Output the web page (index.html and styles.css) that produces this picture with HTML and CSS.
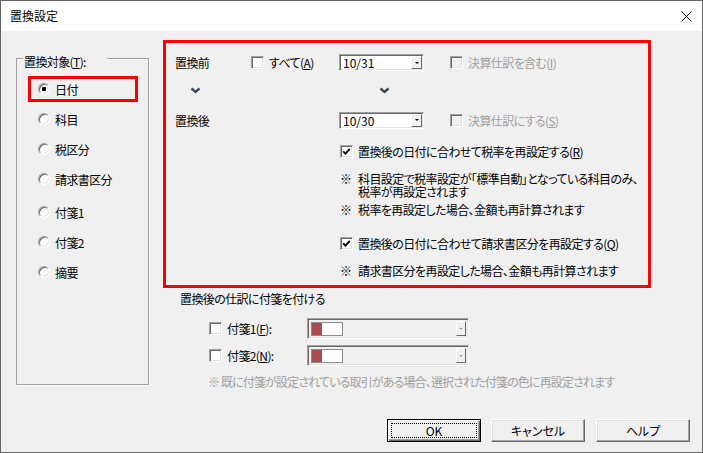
FILE: index.html
```html
<!DOCTYPE html>
<html lang="ja">
<head>
<meta charset="utf-8">
<title>置換設定</title>
<link rel="stylesheet" href="styles.css">
</head>
<body>
<div class="window">
  <div class="titlebar">
    <span class="title">置換設定</span>
    <svg class="close" width="11" height="11" viewBox="0 0 11 11"><path d="M0.5 0.5 L10.5 10.5 M10.5 0.5 L0.5 10.5" stroke="#000" stroke-width="1" fill="none"/></svg>
  </div>
  <div class="client">
    <div class="main">
      <div class="group">
        <div class="group-head"><span class="legend">置換対象(<u>T</u>):</span></div>
        <ul class="radios">
          <li class="rrow"><span class="ritem hl"><span class="radio on"></span>日付</span></li>
          <li class="rrow"><span class="ritem"><span class="radio"></span>科目</span></li>
          <li class="rrow"><span class="ritem"><span class="radio"></span>税区分</span></li>
          <li class="rrow"><span class="ritem"><span class="radio"></span>請求書区分</span></li>
          <li class="rrow gap"><span class="ritem"><span class="radio"></span>付箋1</span></li>
          <li class="rrow"><span class="ritem"><span class="radio"></span>付箋2</span></li>
          <li class="rrow"><span class="ritem"><span class="radio"></span>摘要</span></li>
        </ul>
      </div>
      <div class="rightcol">
        <div class="redbox">
          <div class="row r1">
            <span class="lbl">置換前</span>
            <span class="chkitem w88"><span class="chk"></span>すべて(<u>A</u>)</span>
            <span class="combo"><span class="val">10/31</span><span class="dd"></span></span>
            <span class="chkitem distext"><span class="chk dis"></span>決算仕訳を含む(<u>I</u>)</span>
          </div>
          <div class="row r2">
            <svg class="chev chev1" width="11" height="7" viewBox="0 0 11 7"><polyline points="1.5,1.5 5.5,5 9.5,1.5" fill="none" stroke="#3b4859" stroke-width="2.4"/></svg>
            <svg class="chev chev2" width="11" height="7" viewBox="0 0 11 7"><polyline points="1.5,1.5 5.5,5 9.5,1.5" fill="none" stroke="#3b4859" stroke-width="2.4"/></svg>
          </div>
          <div class="row r3">
            <span class="lbl">置換後</span>
            <span class="w88"></span>
            <span class="combo"><span class="val">10/30</span><span class="dd"></span></span>
            <span class="chkitem distext"><span class="chk dis"></span>決算仕訳にする(<u>S</u>)</span>
          </div>
          <div class="row r4">
            <span class="chkitem indent"><span class="chk"><svg width="9" height="9" viewBox="0 0 9 9"><polyline points="1.2,4.3 3.4,6.6 7.8,1.8" fill="none" stroke="#000" stroke-width="1.8"/></svg></span>置換後の日付に合わせて税率を再設定する(<u>R</u>)</span>
          </div>
          <div class="notes">
            <div class="note n1"><span class="mark">※</span><span>科目設定で税率設定が「標準自動」となっている科目のみ、<br>税率が再設定されます</span></div>
            <div class="note n2"><span class="mark">※</span><span>税率を再設定した場合、金額も再計算されます</span></div>
          </div>
          <div class="row r5">
            <span class="chkitem indent"><span class="chk"><svg width="9" height="9" viewBox="0 0 9 9"><polyline points="1.2,4.3 3.4,6.6 7.8,1.8" fill="none" stroke="#000" stroke-width="1.8"/></svg></span>置換後の日付に合わせて請求書区分を再設定する(<u>Q</u>)</span>
          </div>
          <div class="notes">
            <div class="note n3"><span class="mark">※</span><span>請求書区分を再設定した場合、金額も再計算されます</span></div>
          </div>
        </div>
        <div class="tags-title">置換後の仕訳に付箋を付ける</div>
        <div class="trow t1">
          <span class="chk"></span><span class="tlabel">付箋1(<u>F</u>):</span>
          <span class="tcombo"><span class="swatch"><span class="sw-red"></span></span><span class="dd ddis"></span></span>
        </div>
        <div class="trow t2">
          <span class="chk"></span><span class="tlabel">付箋2(<u>N</u>):</span>
          <span class="tcombo"><span class="swatch"><span class="sw-red"></span></span><span class="dd ddis"></span></span>
        </div>
        <div class="tnote">※ 既に付箋が設定されている取引がある場合、選択された付箋の色に再設定されます</div>
      </div>
    </div>
    <div class="buttons">
      <span class="btn default"><span class="focus">OK</span></span>
      <span class="btn cancel">キャンセル</span>
      <span class="btn help">ヘルプ</span>
    </div>
  </div>
</div>
</body>
</html>
```
FILE: styles.css
```css
html, body {
  margin: 0;
  padding: 0;
  background: #fff;
}
body {
  font-family: "Noto Sans CJK JP", "Noto Sans", sans-serif;
  font-size: 12px;
  font-feature-settings: "palt" 1;
  letter-spacing: -0.6px;
  color: #000;
}
u { text-underline-offset: 1px; }

.window {
  width: 703px;
  height: 453px;
  box-sizing: border-box;
  border: 1px solid #646464;
  display: flex;
  flex-direction: column;
  background: #fff;
}
.titlebar {
  height: 30px;
  flex: none;
  display: flex;
  align-items: center;
  justify-content: space-between;
  padding: 0 10px 0 9px;
  background: #fff;
}
.title { line-height: 12px; letter-spacing: 0; }
.close { display: block; }

.client {
  flex: 1;
  background: #f0f0f0;
  display: flex;
  flex-direction: column;
  padding-bottom: 10px;
}
.main {
  display: flex;
  align-items: flex-start;
}

/* group box */
.group {
  margin: 27px 0 0 15px;
  width: 133px;
  height: 327px;
  box-sizing: border-box;
  border: 1px solid #a0a0a0;
  border-top: none;
  box-shadow: 1px 1px 0 #fff;
  display: flex;
  flex-direction: column;
}
.group-head {
  display: flex;
  height: 12px;
  margin-top: -2px;
  line-height: 12px;
}
.group-head::before,
.group-head::after {
  content: "";
  height: 0;
  align-self: flex-start;
  margin-top: 2px;
  border-top: 1px solid #a0a0a0;
  box-shadow: 0 1px 0 #fff;
}
.group-head::before { width: 6px; }
.group-head::after { flex: 1; }
.legend {
  width: 83px;
  padding-left: 1px;
  white-space: nowrap;
}
.radios {
  list-style: none;
  margin: 6px 0 0;
  padding: 0;
}
.rrow {
  height: 30px;
  display: flex;
  align-items: center;
  padding-left: 11px;
}
.rrow.gap { margin-top: 3px; }
.ritem {
  display: flex;
  align-items: center;
  width: 110px;
  height: 26px;
  box-sizing: border-box;
  padding-left: 10px;
}
.ritem.hl {
  border: 3px solid #f00;
  padding-left: 7px;
}
.radio {
  width: 12px;
  height: 12px;
  box-sizing: border-box;
  border-radius: 50%;
  border: 1px solid;
  border-color: #a0a0a0 #fff #fff #a0a0a0;
  box-shadow: inset 1px 1px 0 #696969, inset -1px -1px 0 #e3e3e3;
  background: #fff;
  margin-right: 5px;
  display: flex;
  align-items: center;
  justify-content: center;
  flex: none;
}
.radio.on::after {
  content: "";
  width: 4px;
  height: 4px;
  border-radius: 1px;
  background: #000;
}

/* right column */
.rightcol {
  margin: 9px 0 0 14px;
  width: 488px;
}
.redbox {
  height: 248px;
  box-sizing: border-box;
  border: 3px solid #f00;
  padding: 10px 0 0 9px;
}
.row {
  display: flex;
  align-items: center;
}
.r1 { height: 19px; }
.r2 { height: 36px; }
.r3 { height: 24px; }
.r4 { height: 38px; }
.r5 { height: 20px; margin-top: 17px; }
.lbl { width: 76px; flex: none; }
.w88 { width: 88px; flex: none; }
.chkitem {
  display: flex;
  align-items: center;
  flex: none;
  white-space: nowrap;
}
.indent { margin-left: 165px; }
.distext { color: #a0a0a0; }

.chk {
  width: 13px;
  height: 13px;
  box-sizing: border-box;
  border: 1px solid;
  border-color: #a0a0a0 #fff #fff #a0a0a0;
  box-shadow: inset 1px 1px 0 #696969, inset -1px -1px 0 #e3e3e3;
  background: #fff;
  margin-right: 5px;
  flex: none;
  display: flex;
  align-items: center;
  justify-content: center;
}
.chk svg { display: block; }
.chk.dis { background: #f0f0f0; }

.combo {
  width: 85px;
  height: 17px;
  box-sizing: border-box;
  border: 1px solid;
  border-color: #a0a0a0 #fff #fff #a0a0a0;
  box-shadow: inset 1px 1px 0 #696969, inset -1px -1px 0 #e3e3e3;
  background: #fff;
  display: flex;
  align-items: center;
  justify-content: space-between;
  padding: 2px 1px 2px 2px;
  margin-right: 26px;
  flex: none;
}
.val {
  padding-left: 1px;
  line-height: 13px;
  letter-spacing: 0;
}
.dd {
  width: 11px;
  height: 13px;
  box-sizing: border-box;
  background: #f0f0f0;
  border: 1px solid;
  border-color: #fff #696969 #696969 #fff;
  display: flex;
  align-items: center;
  justify-content: center;
  flex: none;
}
.dd::after {
  content: "";
  border-left: 2px solid transparent;
  border-right: 2px solid transparent;
  border-top: 2px solid #000;
}
.dd.ddis { width: 10px; height: 15px; }
.dd.ddis::after { border-top-color: #a0a0a0; }

.chev { display: block; flex: none; }
.chev1 { margin-left: 15px; }
.chev2 { margin-left: 178px; }

.notes {
  margin-left: 165px;
  line-height: 13px;
  white-space: nowrap;
}
.note { display: flex; }
.mark { width: 18px; flex: none; }
.n1 { margin-top: 2px; }
.n2 { margin-top: 5px; }
.n3 { margin-top: 11px; }

/* tags */
.tags-title {
  margin-top: 5px;
  padding-left: 17px;
  line-height: 12px;
}
.trow {
  display: flex;
  align-items: center;
  height: 21px;
  padding-left: 46px;
}
.t1 { margin-top: 13px; }
.t2 { margin-top: 6px; }
.tlabel { width: 80px; flex: none; }
.tcombo {
  width: 162px;
  height: 21px;
  box-sizing: border-box;
  border: 1px solid;
  border-color: #a0a0a0 #fff #fff #a0a0a0;
  box-shadow: inset 1px 1px 0 #696969, inset -1px -1px 0 #e3e3e3;
  background: #f0f0f0;
  display: flex;
  align-items: center;
  justify-content: space-between;
  padding: 2px 2px 2px 3px;
  flex: none;
}
.swatch {
  width: 32px;
  height: 14px;
  box-sizing: border-box;
  border: 1px solid #8c8c8c;
  background: #fff;
  display: flex;
}
.sw-red {
  width: 10px;
  background: #a84c4c;
}
.tnote {
  margin-top: 10px;
  padding-left: 45px;
  line-height: 12px;
  color: #a0a0a0;
  white-space: nowrap;
  letter-spacing: -0.85px;
}

/* buttons */
.buttons {
  margin-top: auto;
  display: flex;
  justify-content: flex-end;
  padding-right: 12px;
}
.btn {
  width: 94px;
  height: 23px;
  box-sizing: border-box;
  background: #f0f0f0;
  border: 1px solid;
  border-color: #fff #696969 #696969 #fff;
  box-shadow: inset -1px -1px 0 #a0a0a0, inset 1px 1px 0 #e3e3e3;
  display: flex;
  align-items: center;
  justify-content: center;
  line-height: 12px;
  letter-spacing: 0;
}
.btn.default {
  border: 1px solid #000;
  box-shadow: inset 1px 1px 0 #fff, inset -1px -1px 0 #696969, inset -2px -2px 0 #a0a0a0;
  padding: 3px;
}
.focus {
  flex: 1;
  align-self: stretch;
  border: 1px dotted #000;
  display: flex;
  align-items: center;
  justify-content: center;
}
.cancel { margin-left: 10px; }
.help { margin-left: 11px; }
```
